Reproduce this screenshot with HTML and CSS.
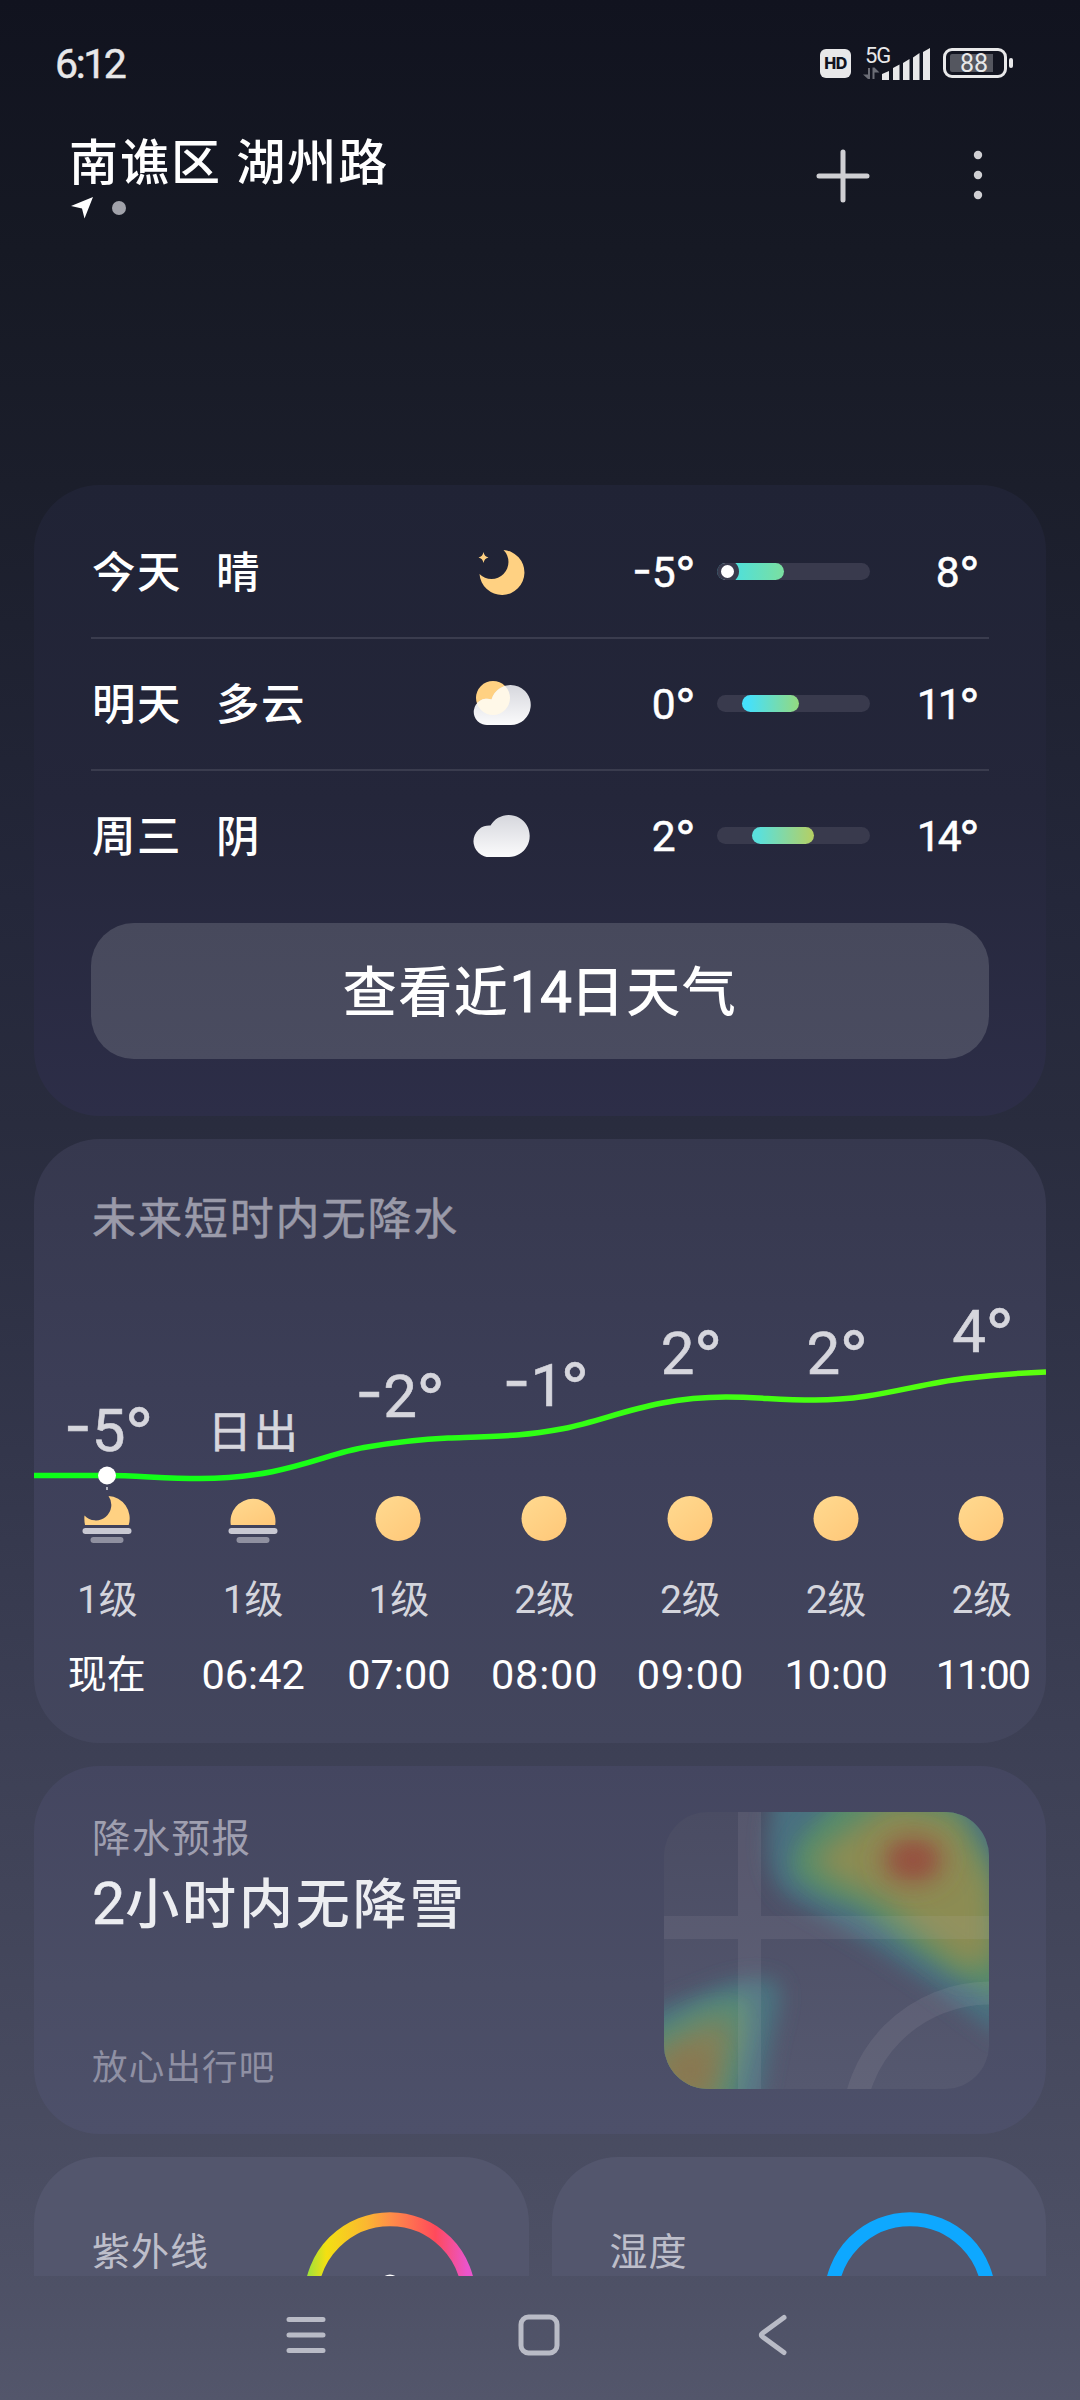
FILE: index.html
```html
<!DOCTYPE html>
<html lang="zh-CN">
<head>
<meta charset="utf-8">
<title>天气</title>
<link rel="stylesheet" href="styles.css">
</head>
<body>
<svg class="defs" width="0" height="0">
  <defs>
    <linearGradient id="sun" x1="0.1" y1="0" x2="0.9" y2="1"><stop offset="0" stop-color="#ffd98f"/><stop offset="1" stop-color="#ffc879"/></linearGradient>
    <linearGradient id="cloud" x1="0" y1="0" x2="0" y2="1"><stop offset="0" stop-color="#d6d7dd"/><stop offset="1" stop-color="#fbfbfc"/></linearGradient>
    <symbol id="i-sun" viewBox="0 0 60 60"><circle cx="30" cy="30.500" r="22.500" fill="url(#sun)"/></symbol>
    <symbol id="i-sunrise" viewBox="0 0 60 60">
      <path d="M7.800 37A22.500 22.500 0 1 1 52.200 37Z" fill="url(#sun)"/>
      <rect x="5.500" y="40" width="49" height="6" rx="3" fill="#c8c8d2"/>
      <rect x="13.500" y="49" width="33" height="6" rx="3" fill="#8f90a0"/>
    </symbol>
    <symbol id="i-moonset" viewBox="0 0 60 60">
      <path d="M31.500 8A22.500 22.500 0 0 1 51.700 37H8Q7 32 7.500 27.500A15.500 15.500 0 0 0 31.500 8Z" fill="#ffd182"/>
      <rect x="5.500" y="40" width="49" height="6" rx="3" fill="#c8c8d2"/>
      <rect x="13.500" y="49" width="33" height="6" rx="3" fill="#8f90a0"/>
    </symbol>
  </defs>
</svg>
<div class="screen">
  <div class="statusbar">
    <span class="clock">6:12</span>
    <div class="status-icons">
      <span class="hd">HD</span>
      <div class="network">
        <span class="gen">5G</span>
        <svg width="68" height="34" viewBox="0 0 68 34">
          <path d="M5 22h2v11H5L0 28.500h5zM9.500 21.500h2l5 5h-5V33h-2z" fill="#6b6d76"/>
          <path d="M19 34v-6l7-3v9zM30 34V22l6.500-3.500V34zM40 34V17l6.500-4V34zM50 34V11.500L56.500 7V34zM60 34V6l7-4V34z" fill="#e8e8e9"/>
        </svg>
      </div>
      <div class="battery"><span>88</span></div>
    </div>
  </div>

  <header class="topbar">
    <div class="place">
      <h1>南谯区 湖州路</h1>
      <div class="pager">
        <svg width="22" height="22" viewBox="0 0 22 22"><path d="M22 0L13.500 21.500 11 11.500 0 9Z" fill="#fff"/></svg>
        <i class="page-dot"></i>
      </div>
    </div>
    <div class="actions">
      <svg width="54" height="54" viewBox="0 0 54 54"><path d="M27 3v48M3 27h48" stroke="#cfcfd3" stroke-width="5" stroke-linecap="round"/></svg>
      <svg width="10" height="54" viewBox="0 0 10 54" fill="#cfcfd3"><circle cx="5" cy="6" r="4.200"/><circle cx="5" cy="26" r="4.200"/><circle cx="5" cy="46" r="4.200"/></svg>
    </div>
  </header>

  <main class="content">
    <section class="card daily">
      <div class="day">
        <span class="name">今天</span><span class="cond">晴</span>
        <svg class="icon" width="60" height="60" viewBox="0 0 60 60">
          <path d="M31.500 8A22.500 22.500 0 1 1 7.500 32A16 16 0 0 0 31.500 8Z" fill="#ffd182"/>
          <path d="M11.500 10Q12.300 14.700 16.500 15.500Q12.300 16.300 11.500 21Q10.700 16.300 6.500 15.500Q10.700 14.700 11.500 10Z" fill="#ffd182"/>
        </svg>
        <span class="temp low"><b>-</b>5<b>°</b></span>
        <div class="range"><div class="fill f1" style="margin-left:0;width:67px"></div><i class="now"></i></div>
        <span class="temp high">8<b>°</b></span>
      </div>
      <div class="day">
        <span class="name">明天</span><span class="cond">多云</span>
        <svg class="icon" width="60" height="60" viewBox="0 0 60 60">
          <clipPath id="pc"><path d="M16.500 51A13.200 13.200 0 1 1 19.500 25.500A20 20 0 1 1 38 51Z"/></clipPath>
          <circle cx="21" cy="24" r="17" fill="#ffd182"/>
          <path d="M16.500 51A13.200 13.200 0 1 1 19.500 25.500A20 20 0 1 1 38 51Z" fill="url(#cloud)"/>
          <circle cx="21" cy="24" r="17" fill="#fff8e8" clip-path="url(#pc)"/>
        </svg>
        <span class="temp low">0<b>°</b></span>
        <div class="range"><div class="fill f2" style="margin-left:25px;width:57px"></div></div>
        <span class="temp high tight">11<b>°</b></span>
      </div>
      <div class="day">
        <span class="name">周三</span><span class="cond">阴</span>
        <svg class="icon" width="60" height="60" viewBox="0 0 60 60">
          <path d="M18.500 51A15.800 15.800 0 1 1 18.500 19.500A21 21 0 1 1 37 51Z" fill="url(#cloud)"/>
        </svg>
        <span class="temp low">2<b>°</b></span>
        <div class="range"><div class="fill f3" style="margin-left:35px;width:62px"></div></div>
        <span class="temp high tight">14<b>°</b></span>
      </div>
      <button class="more">查看近<span>14</span>日天气</button>
    </section>

    <section class="card hourly">
      <h2>未来短时内无降水</h2>
      <svg class="curve" width="1012" height="130" viewBox="0 0 1012 130">
        <defs><linearGradient id="line" gradientUnits="userSpaceOnUse" x1="0" y1="0" x2="1012" y2="0"><stop offset="0" stop-color="#0cff18"/><stop offset="0.250" stop-color="#18ff18"/><stop offset="0.550" stop-color="#35ff14"/><stop offset="1" stop-color="#5cff0e"/></linearGradient></defs>
        <path d="M0 115.500H73C103 115.500 130 118.500 166 118.500C250 118.500 290 94 330 87.500C356 83 380 79.500 414 78C470 76 490 76 530 68.500C580 58 620 37 692 37C726 37 742 40 781 40C840 40 880 24.500 930 18.500C960 15 985 13 1012 12" fill="none" stroke="url(#line)" stroke-width="5.500"/>
        <circle cx="73" cy="115.500" r="9" fill="#fff"/>
        <path d="M73 127v3" stroke="#b0b1bd" stroke-width="2"/>
      </svg>
      <div class="hours">
        <div class="hour"><div class="label" style="padding-top:100px"><b>-</b>5<b>°</b></div><svg width="60" height="60"><use href="#i-moonset"/></svg><span class="wind">1级</span><span class="time word">现在</span></div>
        <div class="hour"><div class="label event" style="padding-top:102px">日出</div><svg width="60" height="60"><use href="#i-sunrise"/></svg><span class="wind">1级</span><span class="time">06:42</span></div>
        <div class="hour"><div class="label" style="padding-top:66px"><b>-</b>2<b>°</b></div><svg width="60" height="60"><use href="#i-sun"/></svg><span class="wind">1级</span><span class="time">07:00</span></div>
        <div class="hour"><div class="label one" style="padding-top:55px"><b>-</b>1<b>°</b></div><svg width="60" height="60"><use href="#i-sun"/></svg><span class="wind">2级</span><span class="time wide">08:00</span></div>
        <div class="hour"><div class="label" style="padding-top:23px">2<b>°</b></div><svg width="60" height="60"><use href="#i-sun"/></svg><span class="wind">2级</span><span class="time wide">09:00</span></div>
        <div class="hour"><div class="label" style="padding-top:23px">2<b>°</b></div><svg width="60" height="60"><use href="#i-sun"/></svg><span class="wind">2级</span><span class="time">10:00</span></div>
        <div class="hour"><div class="label" style="padding-top:1px">4<b>°</b></div><svg width="60" height="60"><use href="#i-sun"/></svg><span class="wind">2级</span><span class="time tight">11:00</span></div>
      </div>
    </section>

    <section class="card rain">
      <div class="rain-text">
        <h3>降水预报</h3>
        <p class="headline"><span>2</span>小时内无降雪</p>
        <p class="hint">放心出行吧</p>
      </div>
      <svg class="map" width="325" height="277" viewBox="0 0 325 277">
        <defs>
          <filter id="b10" x="-40%" y="-40%" width="180%" height="180%"><feGaussianBlur stdDeviation="10"/></filter>
          <filter id="b14" x="-60%" y="-60%" width="220%" height="220%"><feGaussianBlur stdDeviation="14"/></filter>
          <linearGradient id="mapbg" x1="0" y1="0" x2="0" y2="1"><stop offset="0" stop-color="#4a4c63"/><stop offset="1" stop-color="#55586f"/></linearGradient>
        </defs>
        <rect width="325" height="277" fill="url(#mapbg)"/>
        <path d="M112 -40L104 20Q100 62 122 84L165 108 215 138 265 172 340 228V-40Z" fill="#4a6f80" filter="url(#b10)"/>
        <path d="M185 -24L142 20Q120 50 134 66Q150 84 190 93L250 137 345 195 324 50 285 -20Z" fill="#528b6c" filter="url(#b10)"/>
        <path d="M230 -10Q185 14 146 48Q175 74 214 87L260 126 300 158 332 150 330 74 292 4Z" fill="#8c8c52" filter="url(#b14)"/>
        <ellipse cx="249" cy="48" rx="30" ry="22" fill="#965140" filter="url(#b14)"/>
        <ellipse cx="249" cy="48" rx="16" ry="11" fill="#965140" filter="url(#b10)"/>
        <path d="M-30 205L0 195 60 172Q100 160 115 172Q120 190 108 225L94 300H-30Z" fill="#4b7280" filter="url(#b10)"/>
        <path d="M-30 228L40 192 82 182Q92 200 82 235L68 300H-30Z" fill="#578b76" filter="url(#b10)"/>
        <path d="M-30 256L30 216 66 205Q70 225 58 255L46 300H-30Z" fill="#858057" filter="url(#b14)"/>
        <ellipse cx="26" cy="258" rx="22" ry="18" fill="#8a7550" filter="url(#b14)"/>
        <path d="M74 0H97V277H74ZM0 104H74V127H0ZM97 104H325V127H97Z" fill="#cfc8d0" fill-opacity="0.090"/>
        <circle cx="325.500" cy="317.500" r="136.500" fill="none" stroke="#cfc8d0" stroke-opacity="0.100" stroke-width="23"/>
      </svg>
    </section>

    <div class="pair">
      <section class="card metric">
        <h3>紫外线</h3>
        <svg width="174" height="174" viewBox="0 0 174 174">
          <defs><linearGradient id="uv" gradientUnits="userSpaceOnUse" x1="3" y1="0" x2="171" y2="0"><stop offset="0" stop-color="#98e23e"/><stop offset="0.120" stop-color="#f3e012"/><stop offset="0.360" stop-color="#fbb731"/><stop offset="0.500" stop-color="#ff8f48"/><stop offset="0.770" stop-color="#ff4a5b"/><stop offset="0.960" stop-color="#ea55cc"/></linearGradient></defs>
          <circle cx="87" cy="87" r="78.800" fill="none" stroke="url(#uv)" stroke-width="14"/>
          <circle cx="87" cy="73.500" r="10" fill="#fff"/>
        </svg>
      </section>
      <section class="card metric humidity">
        <h3>湿度</h3>
        <svg width="174" height="174" viewBox="0 0 174 174"><circle cx="87" cy="87" r="78.800" fill="none" stroke="#0ea8ff" stroke-width="14"/></svg>
      </section>
    </div>
  </main>

  <nav class="navbar">
    <svg width="44" height="44" viewBox="0 0 44 44"><path d="M5 6.500h34M5 22h34M5 37.500h34" stroke="#b9bbc6" stroke-width="5" stroke-linecap="round"/></svg>
    <svg width="44" height="44" viewBox="0 0 44 44"><rect x="4" y="4" width="36" height="36" rx="7.500" fill="none" stroke="#b9bbc6" stroke-width="5"/></svg>
    <svg width="44" height="44" viewBox="0 0 44 44"><path d="M34 4.500L12.500 20.200Q10 22 12.500 23.800L34 39.500" fill="none" stroke="#b9bbc6" stroke-width="5" stroke-linecap="round"/></svg>
  </nav>
</div>
</body>
</html>
```
FILE: styles.css
```css
* { box-sizing: border-box; margin: 0; padding: 0; }
body {
  font-family: Roboto, "Noto Sans CJK SC", sans-serif;
  color: #fff;
  background: #11131f;
}
svg { display: block; flex: none; }
h1, h2, h3 { font-weight: 400; }
b { display: inline-block; font-family: Inter, sans-serif; font-weight: inherit; }
.defs { position: absolute; }

.screen {
  width: 1080px;
  height: 2400px;
  overflow: hidden;
  display: flex;
  flex-direction: column;
  background: linear-gradient(180deg, #11131f 0, #161924 250px, #1b1e2b 485px, #24273a 900px, #292c3e 1125px, #33364b 1450px, #3d4055 1755px, #494c61 2145px, #4e5166 2290px, #53566b 2400px);
}

/* status bar */
.statusbar { height: 126px; padding: 0 67px 0 55px; display: flex; align-items: center; justify-content: space-between; color: #e8e8e9; }
.clock { font-size: 41px; letter-spacing: -2.400px; line-height: 48px; padding-top: 2px; -webkit-text-stroke: 0.500px #e8e8e9; }
.status-icons { display: flex; align-items: center; }
.hd { width: 31px; height: 29px; border-radius: 6px; background: #e8e8e9; color: #11131f; font: 800 16px/29px Inter, sans-serif; text-align: center; letter-spacing: -0.500px; }
.network { position: relative; width: 68px; height: 34px; margin-left: 12px; }
.gen { position: absolute; left: 2px; top: -3px; font-size: 22px; line-height: 26px; letter-spacing: -1px; }
.battery { position: relative; width: 64px; height: 30px; margin: 0 6px 0 12px; border: 3px solid #e8e8e9; border-radius: 9px; padding: 3px 4px; }
.battery::after { content: ""; position: absolute; right: -9px; top: 7px; width: 4px; height: 10px; border-radius: 2px; background: #e8e8e9; }
.battery span { display: block; width: 43px; height: 18px; padding-left: 10px; border-radius: 2px 0 0 2px; background: #54565f; font-size: 25px; line-height: 19px; }

/* location header */
.topbar { height: 359px; display: flex; justify-content: space-between; align-items: flex-start; padding: 0 97px 0 69px; }
.place { display: flex; flex-direction: column; gap: 2px; padding-top: 7px; }
.place h1 { font-size: 49px; font-weight: 500; letter-spacing: 2px; line-height: 62px; }
.pager { display: flex; align-items: center; gap: 19px; padding-left: 2px; }
.page-dot { width: 14px; height: 14px; border-radius: 50%; background: #a1a2aa; }
.actions { display: flex; gap: 103px; padding-top: 23px; }

/* cards */
.content { height: 1791px; overflow: hidden; display: flex; flex-direction: column; gap: 23px; padding: 0 34px; }
.card { flex: none; border-radius: 66px; overflow: hidden; }

.daily { height: 631px; padding: 22px 57px 0; background: linear-gradient(#202335, #24263a 50%, #2d2e48); }
.day { display: flex; align-items: center; height: 132px; padding-bottom: 1px; border-bottom: 2px solid #3a3c4e; font-size: 43.500px; font-weight: 500; letter-spacing: 1.600px; }
.day:nth-of-type(3) { border-bottom-color: transparent; }
.name { width: 125px; padding: 0 0 4px 1px; }
.cond { width: 256px; padding-bottom: 4px; }
.temp { padding-bottom: 1px; font-size: 42.500px; font-weight: 400; letter-spacing: 0; text-align: right; -webkit-text-stroke: 0.500px #fff; }
.temp b:not(:last-child) { transform: translateY(-2px); }
.temp.tight { letter-spacing: -3px; }
.temp.tight b { margin-left: 1px; letter-spacing: 0; }
.low { width: 163px; }
.high { width: 109px; }
.range { position: relative; width: 153px; height: 17px; margin-left: 22px; border-radius: 9px; background: #393a4d; overflow: hidden; }
.fill { height: 17px; border-radius: 9px; }
.f1 { background: linear-gradient(90deg, #3fe0f0, #7bdfa0); }
.f2 { background: linear-gradient(90deg, #45e0fb 10%, #94d97f); }
.f3 { background: linear-gradient(90deg, #5ae0dc 10%, #b6cf62); }
.now { position: absolute; left: -1px; top: -3px; width: 23px; height: 23px; border-radius: 50%; border: 5px solid #393a4d; background: #fff; }
.more { display: block; width: 898px; height: 136px; margin-top: 20px; padding-bottom: 6px; border: 0; border-radius: 43px; background: linear-gradient(#47495c, #4a4c60); color: #fff; font-family: inherit; font-size: 54px; font-weight: 500; letter-spacing: 1.600px; }
.more span { font-size: 57px; font-weight: 400; letter-spacing: -1.500px; -webkit-text-stroke: 1px #fff; }

.hourly { position: relative; height: 604px; background: linear-gradient(#36384e, #3e405a 55%, #43465d); }
.hourly h2 { height: 150px; padding: 50px 58px 0; font-size: 44px; line-height: 62px; letter-spacing: 1.900px; color: #9a9aa9; -webkit-text-stroke: 0.500px #9a9aa9; }
.curve { position: absolute; left: 0; top: 221px; }
.hours { display: flex; }
.hour { flex: none; width: 145.750px; display: flex; flex-direction: column; align-items: center; }
.label { height: 199px; padding-left: 3px; font-size: 60px; line-height: 80px; color: #d6d6dd; -webkit-text-stroke: 0.600px #d6d6dd; }
.label b:not(:last-child) { transform: translateY(-4px); }
.label.one b:last-child { margin-left: -3px; }
.label.event { padding-left: 2px; font-size: 44.500px; letter-spacing: 1.500px; line-height: 84px; }
.wind { margin-top: 20px; padding-left: 1px; font-size: 39px; line-height: 64px; color: #d4d5dd; }
.time { margin-top: 11px; padding-left: 1px; font-size: 41.500px; line-height: 64px; }
.time.word { padding-left: 0; font-size: 39px; }
.time.wide { letter-spacing: 0.800px; }
.time.tight { padding-left: 2px; letter-spacing: -2px; }

.rain { height: 368px; display: flex; justify-content: space-between; padding: 46px 57px 0 58px; background: linear-gradient(#444660, #4a4d65 60%, #4d506a); }
.rain h3 { padding-top: 1px; font-size: 38.500px; line-height: 52px; letter-spacing: 1.300px; color: #9f9fb0; }
.headline { padding-top: 1px; font-size: 54px; line-height: 76px; letter-spacing: 2.900px; color: #ecedf1; font-weight: 500; }
.headline span { font-size: 59px; font-weight: 400; letter-spacing: 0; -webkit-text-stroke: 0.600px #ecedf1; }
.hint { margin-top: 99px; font-size: 35.500px; line-height: 50px; letter-spacing: 1.200px; color: #8f90a3; }
.map { border-radius: 44px; }

.pair { flex: none; display: flex; gap: 23px; }
.metric { width: 494.500px; height: 300px; display: flex; justify-content: space-between; padding: 54px 51.500px 0 58px; background: #53566d; }
.metric.humidity { padding-right: 49px; }
.metric h3 { padding-top: 15px; font-size: 38px; line-height: 52px; letter-spacing: 1px; color: #bdbeca; }

/* system navigation */
.navbar { height: 124px; padding: 0 286px 7px 284px; display: flex; align-items: center; justify-content: space-between; }
```
